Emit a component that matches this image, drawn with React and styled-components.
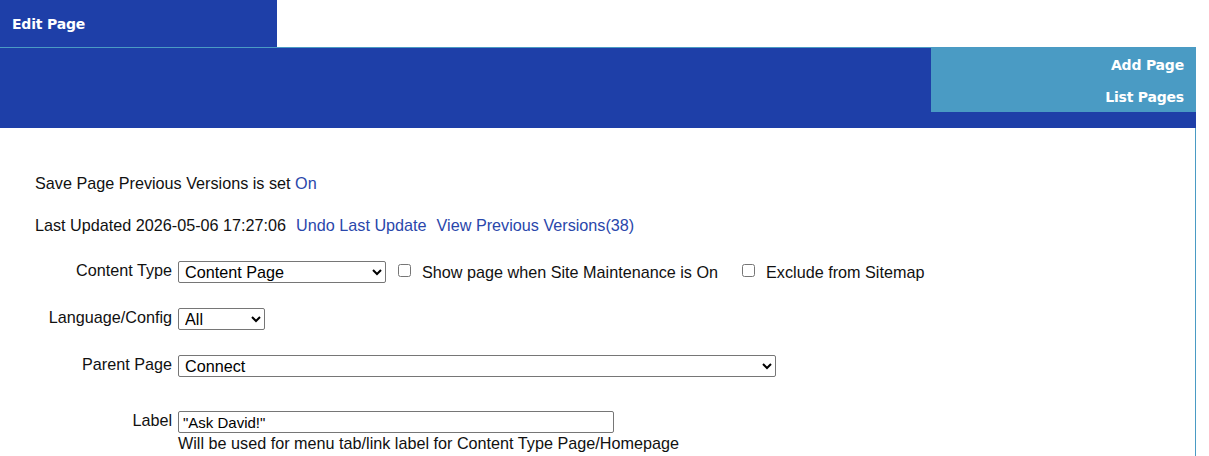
import React from "react";
import styled, { createGlobalStyle } from "styled-components";

const dark = "#1e3fa8";
const light = "#4a9bc4";

const GlobalStyle = createGlobalStyle`
  body {
    margin: 0;
    background: #fff;
    font-family: "Liberation Sans", Arial, sans-serif;
    color: #111;
  }
`;

const Page = styled.div`
  width: 1196px;
`;

const TabRow = styled.div`
  display: flex;
  height: 47px;
`;

const Tab = styled.div`
  width: 277px;
  background: ${dark};
  color: #fff;
  font-family: "DejaVu Sans", Verdana, sans-serif;
  font-weight: 700;
  font-size: 14px;
  display: flex;
  align-items: center;
  padding-left: 12px;
  box-sizing: border-box;
  letter-spacing: -0.2px;
`;

const Band = styled.div`
  height: 80px;
  background: ${dark};
  border-top: 1px solid ${light};
  display: flex;
  justify-content: flex-end;
  align-items: flex-start;
`;

const SideMenu = styled.div`
  width: 265px;
  background: ${light};
  display: flex;
  flex-direction: column;
`;

const MenuLink = styled.a`
  height: 32px;
  line-height: 34px;
  text-align: right;
  padding-right: 12px;
  color: #fff;
  font-family: "DejaVu Sans", Verdana, sans-serif;
  font-weight: 700;
  font-size: 14px;
  letter-spacing: -0.2px;
  text-decoration: none;
`;

const Content = styled.div`
  border-right: 1px solid ${light};
  padding: 46px 0 40px 35px;
  font-size: 16.2px;
`;

const Line = styled.div`
  line-height: 18px;
  margin-bottom: ${(p) => p.gap || 0}px;
`;

const Link = styled.a`
  color: #2a47ab;
  text-decoration: none;
  margin-left: ${(p) => p.space || 0}px;
`;

const Form = styled.div`
  display: grid;
  grid-template-columns: 137px auto;
  column-gap: 6px;
  align-items: start;
`;

const FieldLabel = styled.div`
  text-align: right;
  line-height: 18px;
  margin-top: ${(p) => p.top || 0}px;
`;

const Field = styled.div`
  display: flex;
  align-items: center;
  flex-wrap: wrap;
  margin-top: ${(p) => p.top || 0}px;
`;

const Select = styled.select`
  width: ${(p) => p.w}px;
  height: 22px;
  font-family: "Liberation Sans", Arial, sans-serif;
  font-size: 16.2px;
  color: #000;
  border: 1px solid #767676;
  border-radius: 2px;
  background: #fff;
  padding: 0 2px;
  margin: 0;
`;

const Check = styled.label`
  display: flex;
  align-items: center;
  margin-left: ${(p) => p.space}px;
  input {
    width: 13px;
    height: 13px;
    margin: 0 11px 0 0;
    position: relative;
    top: -2px;
  }
`;

const TextInput = styled.input`
  width: 436px;
  height: 22px;
  box-sizing: border-box;
  border: 1px solid #767676;
  border-radius: 2px;
  font-family: "Liberation Sans", Arial, sans-serif;
  font-size: 15px;
  padding: 0 4px;
  margin: 0;
  color: #000;
`;

const Hint = styled.div`
  width: 100%;
  line-height: 19px;
  margin-top: 1px;
`;

export default function App() {
  return (
    <>
      <GlobalStyle />
      <Page>
        <TabRow>
          <Tab>Edit Page</Tab>
        </TabRow>
        <Band>
          <SideMenu>
            <MenuLink href="#">Add Page</MenuLink>
            <MenuLink href="#">List Pages</MenuLink>
          </SideMenu>
        </Band>
        <Content>
          <Line gap={24}>
            Save Page Previous Versions is set <Link href="#">On</Link>
          </Line>
          <Line>
            Last Updated 2026-05-06 17:27:06
            <Link href="#" space={10}>Undo Last Update</Link>
            <Link href="#" space={10}>View Previous Versions(38)</Link>
          </Line>

          <Form>
            <FieldLabel top={27}>Content Type</FieldLabel>
            <Field top={27}>
              <Select w={208} defaultValue="content">
                <option value="content">Content Page</option>
              </Select>
              <Check space={12}>
                <input type="checkbox" />
                Show page when Site Maintenance is On
              </Check>
              <Check space={24}>
                <input type="checkbox" />
                Exclude from Sitemap
              </Check>
            </Field>

            <FieldLabel top={25}>Language/Config</FieldLabel>
            <Field top={25}>
              <Select w={87} defaultValue="all">
                <option value="all">All</option>
              </Select>
            </Field>

            <FieldLabel top={25}>Parent Page</FieldLabel>
            <Field top={25}>
              <Select w={598} defaultValue="connect">
                <option value="connect">Connect</option>
              </Select>
            </Field>

            <FieldLabel top={34}>Label</FieldLabel>
            <Field top={34}>
              <TextInput defaultValue={'"Ask David!"'} />
              <Hint>Will be used for menu tab/link label for Content Type Page/Homepage</Hint>
            </Field>
          </Form>
        </Content>
      </Page>
    </>
  );
}
